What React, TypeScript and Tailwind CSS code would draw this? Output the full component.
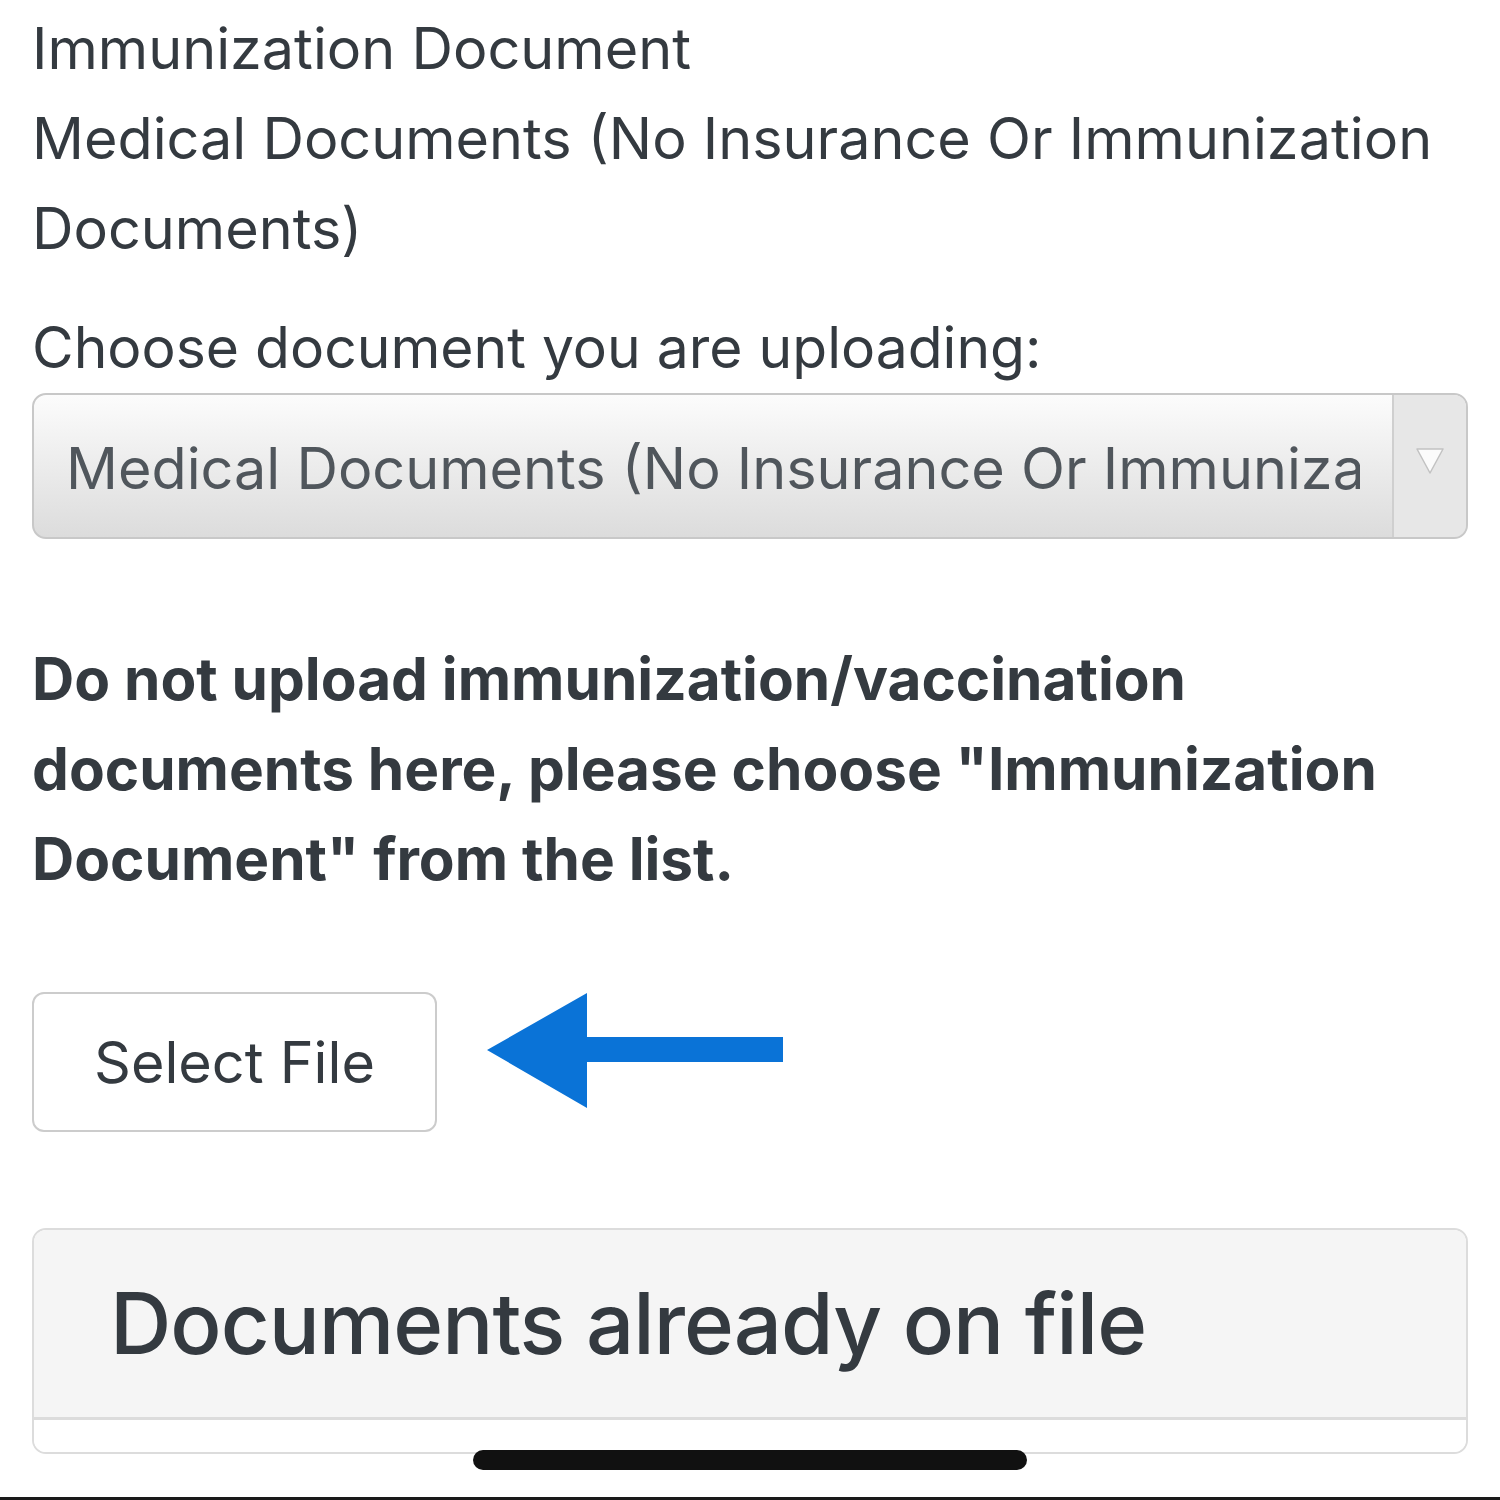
export default function App() {
  return (
    <div className="w-[1500px] h-[1500px] bg-white overflow-hidden relative text-[#343a40]" style={{ fontFamily: 'Inter, "Liberation Sans", sans-serif' }}>
      <div className="px-8">
        <div className="text-[57.5px] leading-[90px] pt-[3px]">
          <div>Immunization Document</div>
          <div>Medical Documents (No Insurance Or Immunization Documents)</div>
        </div>

        <div className="mt-[35px] text-[57px] leading-[80px]">Choose document you are uploading:</div>

        <div className="mt-[5px] flex h-[146px] rounded-[14px] border-2 border-[#c8c8c8] bg-gradient-to-b from-[#fcfcfc] to-[#dcdcdc] overflow-hidden">
          <div className="flex-1 min-w-0 flex items-center pl-[32px] pr-[32px] pt-[4px]">
            <div className="overflow-hidden whitespace-nowrap text-[57.5px] text-[#50565c]">
              Medical Documents (No Insurance Or Immunization Documents)
            </div>
          </div>
          <div className="w-[74px] border-l-2 border-[#cfcfcf] bg-[#e7e7e7] flex justify-center pt-[52px]">
            <svg width="30" height="28" viewBox="0 0 30 28">
              <path d="M2 2 L15 26 L28 2 Z" fill="#fbfbfb" stroke="#c2c2c2" strokeWidth="1.5" strokeLinejoin="round" />
            </svg>
          </div>
        </div>

        <div className="mt-[95px] text-[58.5px] leading-[90px] font-bold text-[#343a40]">
          Do not upload immunization/vaccination documents here, please choose "Immunization Document" from the list.
        </div>

        <div className="mt-[88px] flex items-center">
          <button className="w-[405px] h-[140px] rounded-[12px] border-2 border-[#cccccc] bg-white text-[57.5px] text-[#343a40]">
            Select File
          </button>
          <svg className="ml-[50px] -mt-[22px]" width="298" height="116" viewBox="0 0 298 116">
            <path d="M0 57 L100 0 L100 44 L296 44 L296 69 L100 69 L100 115 Z" fill="#0a73d7" />
          </svg>
        </div>

        <div className="mt-[96px] rounded-[14px] border-2 border-[#dcdcdc] overflow-hidden">
          <div className="bg-[#f5f5f5] h-[190px] border-b-[3px] border-[#dcdcdc] flex items-center pl-[76px]">
            <div className="text-[85px] font-medium tracking-[-1px] text-[#343a40]">Documents already on file</div>
          </div>
          <div className="h-[32px] bg-white"></div>
        </div>
      </div>

      <div className="absolute left-[473px] top-[1450px] w-[554px] h-[20px] rounded-full bg-[#111111]"></div>
      <div className="absolute left-0 bottom-0 w-full h-[3px] bg-[#1a1a1a]"></div>
    </div>
  );
}
